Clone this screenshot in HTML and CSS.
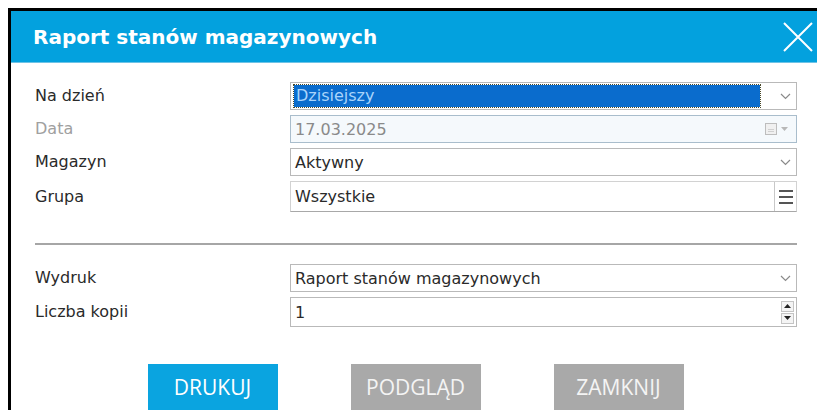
FILE: index.html
```html
<!DOCTYPE html>
<html lang="pl">
<head>
<meta charset="utf-8">
<title>Raport stanów magazynowych</title>
<link rel="stylesheet" href="styles.css">
</head>
<body>
<div class="dialog">
  <header class="dialog-head">
    <h1 class="dialog-title">Raport stanów magazynowych</h1>
    <button class="close" aria-label="Zamknij">
      <svg width="30" height="30" viewBox="0 0 30 30"><path d="M1 1 L29 29 M29 1 L1 29" stroke="#fff" stroke-width="2" fill="none"/></svg>
    </button>
  </header>

  <div class="dialog-body">
    <div class="form">
      <label class="label">Na dzień</label>
      <div class="field select">
        <span class="selected">Dzisiejszy</span>
        <svg class="chevron" width="11" height="7" viewBox="0 0 11 7"><path d="M1 1 L5.5 5.5 L10 1" stroke="#8a8a8a" stroke-width="1.2" fill="none"/></svg>
      </div>

      <label class="label disabled">Data</label>
      <div class="field date">
        <span class="value">17.03.2025</span>
        <span class="date-btn">
          <svg width="12" height="12" viewBox="0 0 12 12"><rect x="0.5" y="0.5" width="11" height="11" fill="#f0f0f0" stroke="#bdbdbd"/><path d="M3 6.5 H9 M3 8.5 H9" stroke="#d0d0d0"/></svg>
          <svg width="7" height="4" viewBox="0 0 7 4"><path d="M0 0 H7 L3.5 4 Z" fill="#b8b8b8"/></svg>
        </span>
      </div>

      <label class="label">Magazyn</label>
      <div class="field select">
        <span class="value">Aktywny</span>
        <svg class="chevron" width="11" height="7" viewBox="0 0 11 7"><path d="M1 1 L5.5 5.5 L10 1" stroke="#8a8a8a" stroke-width="1.2" fill="none"/></svg>
      </div>

      <label class="label">Grupa</label>
      <div class="field lookup">
        <span class="value">Wszystkie</span>
        <span class="menu-btn">
          <svg width="16" height="18" viewBox="0 0 16 18"><path d="M1 3 H15 M1 9 H15 M1 15 H15" stroke="#555" stroke-width="2"/></svg>
        </span>
      </div>
    </div>

    <hr class="sep">

    <div class="form">
      <label class="label">Wydruk</label>
      <div class="field select">
        <span class="value">Raport stanów magazynowych</span>
        <svg class="chevron" width="11" height="7" viewBox="0 0 11 7"><path d="M1 1 L5.5 5.5 L10 1" stroke="#8a8a8a" stroke-width="1.2" fill="none"/></svg>
      </div>

      <label class="label">Liczba kopii</label>
      <div class="field spin">
        <span class="value">1</span>
        <span class="spin-btns">
          <span class="spin-btn"><svg width="7" height="4" viewBox="0 0 7 4"><path d="M0 4 H7 L3.5 0 Z" fill="#222"/></svg></span>
          <span class="spin-btn"><svg width="7" height="4" viewBox="0 0 7 4"><path d="M0 0 H7 L3.5 4 Z" fill="#222"/></svg></span>
        </span>
      </div>
    </div>

    <div class="actions">
      <button class="btn primary">DRUKUJ</button>
      <button class="btn muted">PODGLĄD</button>
      <button class="btn muted">ZAMKNIJ</button>
    </div>
  </div>
</div>
</body>
</html>
```

FILE: styles.css
```css
html, body {
  margin: 0;
  overflow: hidden;
  background: #fff;
}

body {
  padding: 8px 0 0 8px;
  font-family: "DejaVu Sans", Verdana, sans-serif;
  font-size: 16px;
  color: #2a2a2a;
}

.dialog {
  width: 809px;
  border-top: 3px solid #000;
  border-left: 3px solid #000;
  background: #fff;
}

.dialog-head {
  height: 51px;
  background: #03a1de;
  border-bottom: 1px solid #6ec3e6;
  display: flex;
  align-items: center;
  justify-content: space-between;
  padding: 0 7px 0 22px;
}

.dialog-title {
  margin: 0;
  font-size: 20px;
  font-weight: bold;
  color: #fff;
}

.close {
  border: 0;
  background: none;
  padding: 0;
  width: 30px;
  height: 30px;
  display: flex;
}

.dialog-body {
  padding: 19px 23px 0 24px;
}

.form {
  display: grid;
  grid-template-columns: 255px 507px;
  row-gap: 5px;
  align-items: center;
}

.label {
  line-height: 28px;
}

.label.disabled {
  color: #a0a0a0;
}

.field {
  height: 28px;
  box-sizing: border-box;
  border: 1px solid #b9b9b9;
  background: #fff;
  display: flex;
  align-items: center;
  padding: 0 5px 0 4px;
  gap: 6px;
  white-space: nowrap;
}

.field .value {
  flex: 1;
}

.selected {
  flex: 1;
  align-self: stretch;
  margin: 2px 14px 2px -1px;
  padding-left: 2px;
  background: #0a6ccd;
  color: #a9d4fb;
  outline: 1px dotted #4a4a2a;
  line-height: 22px;
}

.date {
  background: #f5f9fc;
  border-color: #a9bdcc;
  color: #8a8a8a;
}

.date-btn {
  display: flex;
  align-items: center;
  gap: 4px;
  margin-right: 3px;
}

.lookup {
  height: 31px;
  border-color: #d2d2d2;
  border-bottom-color: #a8a8a8;
  padding-right: 0;
}

.menu-btn {
  align-self: stretch;
  width: 21px;
  border-left: 1px solid #c8c8c8;
  display: flex;
  align-items: center;
  justify-content: center;
}

.sep {
  margin: 31px 0 19px 0;
  border: 0;
  height: 2px;
  background: #a6a6a6;
}

.spin {
  height: 30px;
  padding-right: 2px;
}

.spin-btns {
  display: flex;
  flex-direction: column;
  gap: 1px;
}

.spin-btn {
  width: 13px;
  height: 11px;
  box-sizing: border-box;
  border: 1px solid #c4c4c4;
  background: #f4f4f4;
  display: flex;
  align-items: center;
  justify-content: center;
}

.actions {
  display: flex;
  justify-content: center;
  gap: 73px;
  margin-top: 37px;
  margin-left: -24px;
  margin-right: -23px;
}

.btn {
  width: 130px;
  height: 46px;
  border: 0;
  padding: 0;
  font-family: "Open Sans", sans-serif;
  font-size: 21px;
  color: #fff;
}

.btn.primary {
  background: #0aa4e0;
}

.btn.muted {
  background: #a9a9a9;
  color: #f4f4f4;
}
```
